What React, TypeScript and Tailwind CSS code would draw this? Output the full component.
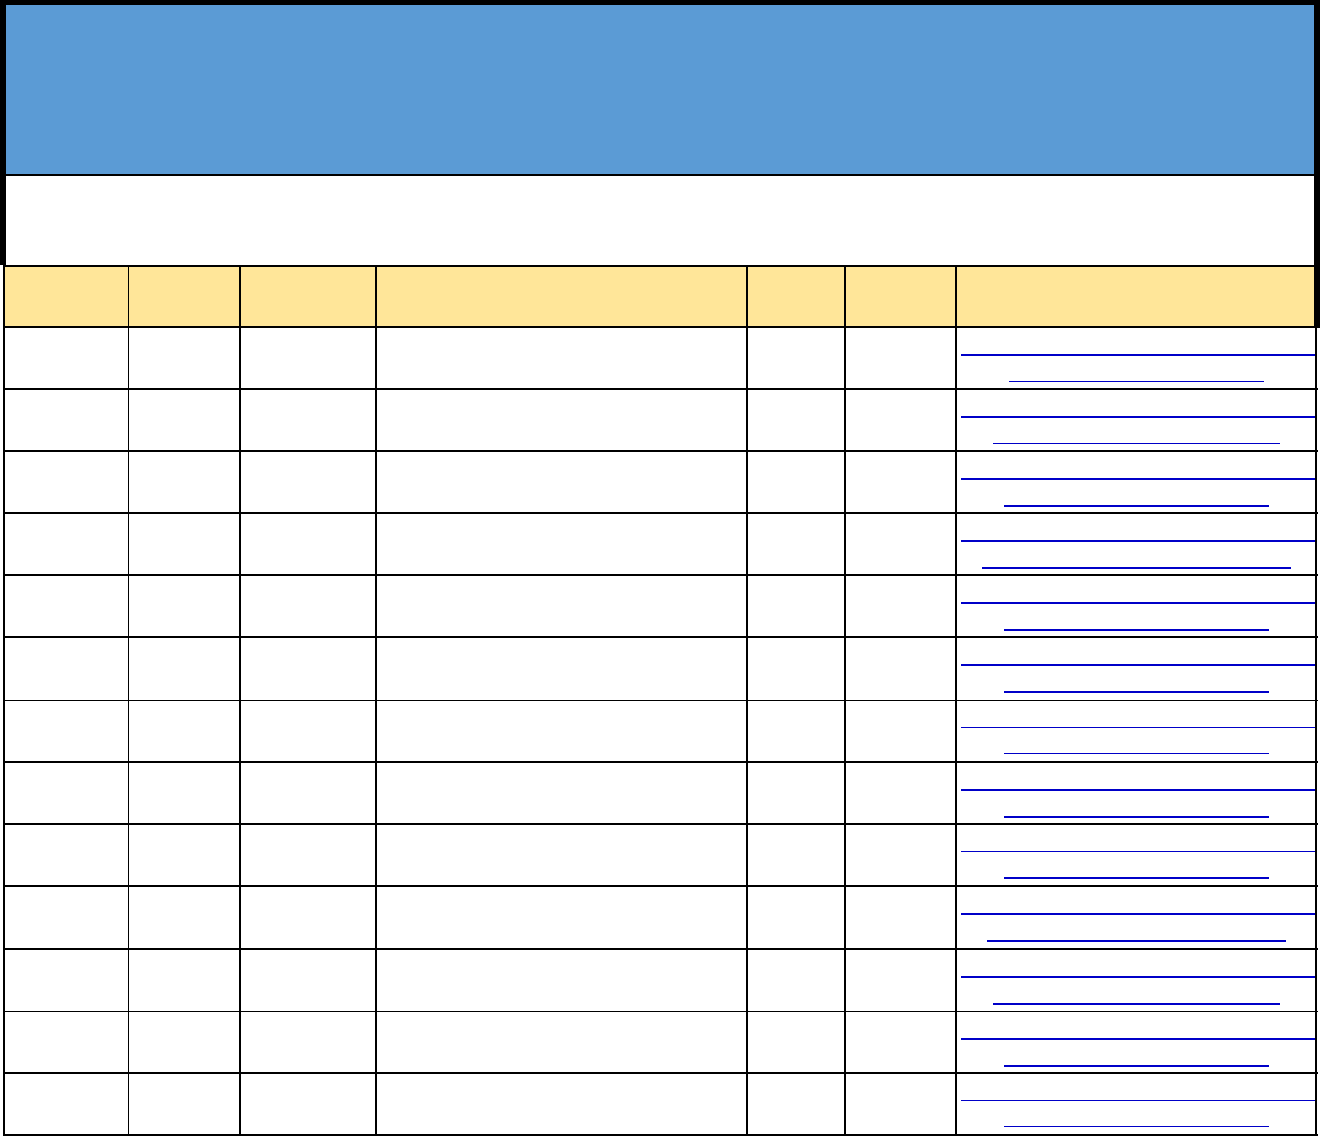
import React from "react";

// column widths incl. right border, px
const cols = [124, 112, 136, 371, 98, 111];
const colBorders = ["border-r", "border-r-2", "border-r-2", "border-r-2", "border-r-2", "border-r-2"];

type LinkRow = {
  h: string;
  top: "thick" | "thin";
  bottom: "thick" | "thin";
  w: number;
};

const rows: LinkRow[] = [
  { h: "h-[62px]", top: "thick", bottom: "thin", w: 255 },
  { h: "h-[62px]", top: "thick", bottom: "thin", w: 287 },
  { h: "h-[62px]", top: "thick", bottom: "thick", w: 265 },
  { h: "h-[62px]", top: "thick", bottom: "thick", w: 309 },
  { h: "h-[62px]", top: "thick", bottom: "thick", w: 265 },
  { h: "h-[63px]", top: "thick", bottom: "thick", w: 265 },
  { h: "h-[62px]", top: "thin", bottom: "thin", w: 265 },
  { h: "h-[62px]", top: "thick", bottom: "thick", w: 265 },
  { h: "h-[62px]", top: "thin", bottom: "thick", w: 265 },
  { h: "h-[63px]", top: "thick", bottom: "thick", w: 299 },
  { h: "h-[62px]", top: "thick", bottom: "thick", w: 287 },
  { h: "h-[62px]", top: "thick", bottom: "thick", w: 265 },
  { h: "h-[62px]", top: "thin", bottom: "thin", w: 265 },
];

// row lines that are drawn thinner in the sheet
const thinRowLine = [5, 10];

function Underline({ thick, width, className }: { thick: boolean; width: number; className?: string }) {
  return (
    <a
      href="#"
      className={`block ${thick ? "h-[2px]" : "h-px"} bg-[#0000c8] ${className ?? ""}`}
      style={{ width }}
    />
  );
}

export default function App() {
  return (
    <div className="w-[1320px] bg-white font-['Liberation_Sans',Arial,sans-serif]">
      {/* title block */}
      <div className="border-t-[5px] border-x-[6px] border-black">
        <div className="h-[169px] bg-[#5b9bd5]" />
        <div className="h-[91px] border-t-2 border-black bg-white" />
      </div>

      {/* table */}
      <div className="ml-[3px] w-[1317px] border-l-2 border-black">
        {/* header row */}
        <div className="flex h-[63px] w-[1316px] border-y-2 border-black bg-[#ffe699]">
          {cols.map((w, i) => (
            <div key={i} className={`h-full border-black ${colBorders[i]}`} style={{ width: w }} />
          ))}
          <div className="h-full w-[363px] border-r-[6px] border-black" />
        </div>

        {rows.map((r, idx) => (
          <div
            key={idx}
            className={`flex w-[1313px] ${r.h} border-black ${thinRowLine.includes(idx) ? "border-b" : "border-b-2"}`}
          >
            {cols.map((w, i) => (
              <div key={i} className={`h-full border-black ${colBorders[i]}`} style={{ width: w }} />
            ))}
            <div className="flex h-full w-[360px] flex-col border-r-2 border-black">
              <Underline thick={r.top === "thick"} width={354} className="ml-[4px] mt-[26px]" />
              <Underline thick={r.bottom === "thick"} width={r.w} className="mt-[25px] self-center" />
            </div>
          </div>
        ))}
      </div>
    </div>
  );
}
